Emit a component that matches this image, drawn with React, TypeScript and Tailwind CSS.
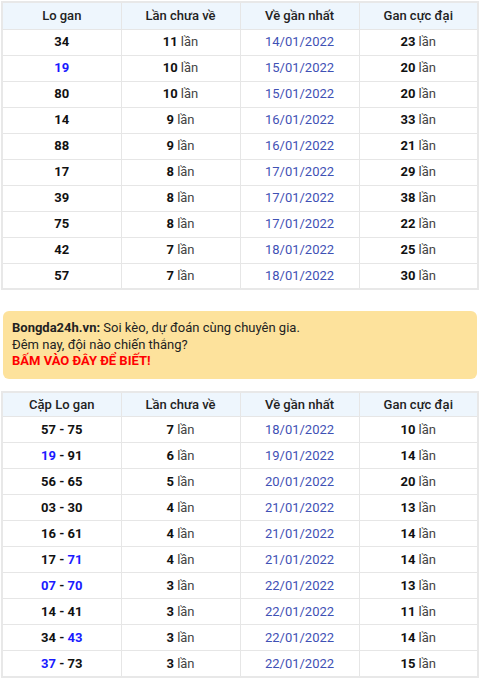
const single: [string, number, string, number][] = [
  ['34', 11, '14/01/2022', 23],
  ['19', 10, '15/01/2022', 20],
  ['80', 10, '15/01/2022', 20],
  ['14', 9, '16/01/2022', 33],
  ['88', 9, '16/01/2022', 21],
  ['17', 8, '17/01/2022', 29],
  ['39', 8, '17/01/2022', 38],
  ['75', 8, '17/01/2022', 22],
  ['42', 7, '18/01/2022', 25],
  ['57', 7, '18/01/2022', 30],
];

// blue marks which number of the pair is highlighted
const pairs: [string, string, boolean, boolean, number, string, number][] = [
  ['57', '75', false, false, 7, '18/01/2022', 10],
  ['19', '91', true, false, 6, '19/01/2022', 14],
  ['56', '65', false, false, 5, '20/01/2022', 20],
  ['03', '30', false, false, 4, '21/01/2022', 13],
  ['16', '61', false, false, 4, '21/01/2022', 14],
  ['17', '71', false, true, 4, '21/01/2022', 14],
  ['07', '70', true, true, 3, '22/01/2022', 13],
  ['14', '41', false, false, 3, '22/01/2022', 11],
  ['34', '43', false, true, 3, '22/01/2022', 14],
  ['37', '73', true, false, 3, '22/01/2022', 15],
];

const cell = 'border border-[#e6e6e6] text-center p-0';

function Lan({ n }: { n: number }) {
  return (
    <>
      <b className="font-bold text-[#111]">{n}</b> <span className="text-[#444]">lần</span>
    </>
  );
}

function Head({ first, tall }: { first: string; tall?: boolean }) {
  return (
    <thead>
      <tr className={`bg-[#eef6fd] ${tall ? 'h-[27px]' : 'h-[25px]'} text-[13px] font-medium text-[#222]`}>
        <th className={`${cell} font-medium`}>{first}</th>
        <th className={`${cell} font-medium`}>Lần chưa về</th>
        <th className={`${cell} font-medium`}>Về gần nhất</th>
        <th className={`${cell} font-medium`}>Gan cực đại</th>
      </tr>
    </thead>
  );
}

export default function App() {
  return (
    <div className="w-[480px] bg-white px-[1px] pt-[1px] font-['Roboto',sans-serif] text-[13px]">
      <table className="w-full table-fixed border-collapse border-2 border-[#e8e8e8]">
        <Head first="Lo gan" tall />
        <tbody>
          {single.map(([lo, chua, date, max]) => (
            <tr key={lo} className="h-[26px]">
              <td className={`${cell} font-bold ${lo === '19' ? 'text-[#1a1aff]' : 'text-[#111]'}`}>{lo}</td>
              <td className={cell}><Lan n={chua} /></td>
              <td className={`${cell} text-[#3f51b5]`}>{date}</td>
              <td className={cell}><Lan n={max} /></td>
            </tr>
          ))}
        </tbody>
      </table>

      <div className="mx-[2px] mt-[21px] mb-[12px] rounded-md bg-[#fde29c] px-[9px] py-[9px] leading-[16.5px] text-[#222]">
        <div><b className="font-bold">Bongda24h.vn:</b> Soi kèo, dự đoán cùng chuyên gia.</div>
        <div>Đêm nay, đội nào chiến thắng?</div>
        <div className="font-bold text-[#ff0000]">BẤM VÀO ĐÂY ĐỂ BIẾT!</div>
      </div>

      <table className="w-full table-fixed border-collapse border-2 border-[#e8e8e8]">
        <Head first="Cặp Lo gan" />
        <tbody>
          {pairs.map(([a, b, ba, bb, chua, date, max]) => (
            <tr key={a + b} className="h-[26px]">
              <td className={`${cell} font-bold text-[#111]`}>
                <span className={ba ? 'text-[#1a1aff]' : ''}>{a}</span> -{' '}
                <span className={bb ? 'text-[#1a1aff]' : ''}>{b}</span>
              </td>
              <td className={cell}><Lan n={chua} /></td>
              <td className={`${cell} text-[#3f51b5]`}>{date}</td>
              <td className={cell}><Lan n={max} /></td>
            </tr>
          ))}
        </tbody>
      </table>
    </div>
  );
}
